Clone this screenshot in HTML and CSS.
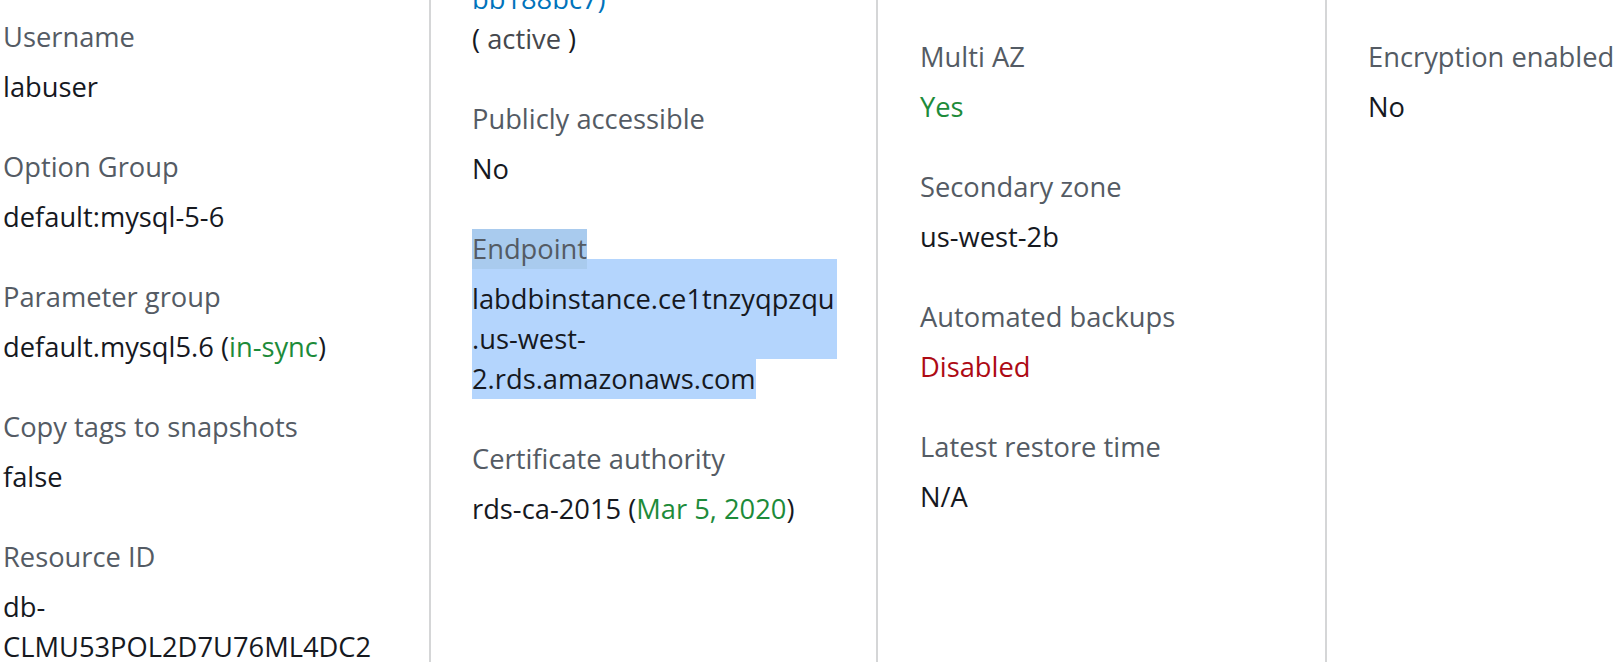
FILE: index.html
```html
<!DOCTYPE html>
<html lang="en">
<head>
<meta charset="utf-8">
<title>DB instance details</title>
<link rel="stylesheet" href="styles.css">
</head>
<body>
<div class="details">
  <div class="col col-first">
    <div class="field">
      <div class="label">Username</div>
      <div class="value">labuser</div>
    </div>
    <div class="field">
      <div class="label">Option Group</div>
      <div class="value">default:mysql-5-6</div>
    </div>
    <div class="field">
      <div class="label">Parameter group</div>
      <div class="value">default.mysql5.6 (<span class="ok">in-sync</span>)</div>
    </div>
    <div class="field">
      <div class="label">Copy tags to snapshots</div>
      <div class="value">false</div>
    </div>
    <div class="field">
      <div class="label">Resource ID</div>
      <div class="value">db-<br>CLMU53POL2D7U76ML4DC2</div>
    </div>
  </div>

  <div class="col col-second">
    <div class="field field-cut">
      <div class="value"><a class="link" href="#">bb188bc7)</a><br>( <span class="muted">active</span> )</div>
    </div>
    <div class="field">
      <div class="label">Publicly accessible</div>
      <div class="value">No</div>
    </div>
    <div class="field">
      <div class="label"><span class="sel-label">Endpoint</span></div>
      <div class="value">
        <span class="sel-block">labdbinstance.ce1tnzyqpzqu<br>.us-west-</span>
        <span class="sel-line">2.rds.amazonaws.com</span>
      </div>
    </div>
    <div class="field">
      <div class="label">Certificate authority</div>
      <div class="value">rds-ca-2015 (<span class="ok">Mar 5, 2020</span>)</div>
    </div>
  </div>

  <div class="col col-third">
    <div class="field">
      <div class="label">Multi AZ</div>
      <div class="value ok">Yes</div>
    </div>
    <div class="field">
      <div class="label">Secondary zone</div>
      <div class="value">us-west-2b</div>
    </div>
    <div class="field">
      <div class="label">Automated backups</div>
      <div class="value bad">Disabled</div>
    </div>
    <div class="field">
      <div class="label">Latest restore time</div>
      <div class="value">N/A</div>
    </div>
  </div>

  <div class="col col-fourth">
    <div class="field">
      <div class="label">Encryption enabled</div>
      <div class="value">No</div>
    </div>
  </div>
</div>
</body>
</html>
```

FILE: styles.css
```css
html, body {
  margin: 0;
  padding: 0;
  background: #ffffff;
  overflow: hidden;
}

body {
  font-family: "Open Sans", "Noto Sans", sans-serif;
  font-size: 27.3px;
  line-height: 40px;
  color: #16191f;
}

.details {
  display: flex;
  align-items: stretch;
  height: 662px;
}

.col {
  box-sizing: border-box;
  flex: none;
  white-space: nowrap;
}

.col-first {
  width: 429px;
  padding: 17px 0 0 3px;
}

.col-second {
  width: 447px;
  border-left: 2px solid #d5d6d7;
  padding-left: 41px;
}

.col-third {
  width: 449px;
  border-left: 2px solid #d5d6d7;
  padding: 37px 0 0 42px;
}

.col-fourth {
  flex: 1;
  border-left: 2px solid #d5d6d7;
  padding: 37px 0 0 41px;
}

.field {
  margin-bottom: 40px;
}

.field-cut {
  margin-top: -21px;
}

.label {
  color: #545b64;
  line-height: 40px;
}

.value {
  margin-top: 10px;
  line-height: 40px;
}

.field-cut .value {
  margin-top: 0;
}

.link {
  color: #0073bb;
  text-decoration: none;
}

.muted {
  color: #45484d;
}

.ok {
  color: #1d8b3a;
}

.bad {
  color: #ad0a14;
}

.sel-label {
  display: inline-block;
  background: #a9cbee;
}

.sel-block {
  display: block;
  width: fit-content;
  background: #b4d5fd;
  margin-top: -20px;
  padding: 20px 2px 0 0;
}

.sel-line {
  display: block;
  width: fit-content;
  background: #b4d5fd;
}
```
